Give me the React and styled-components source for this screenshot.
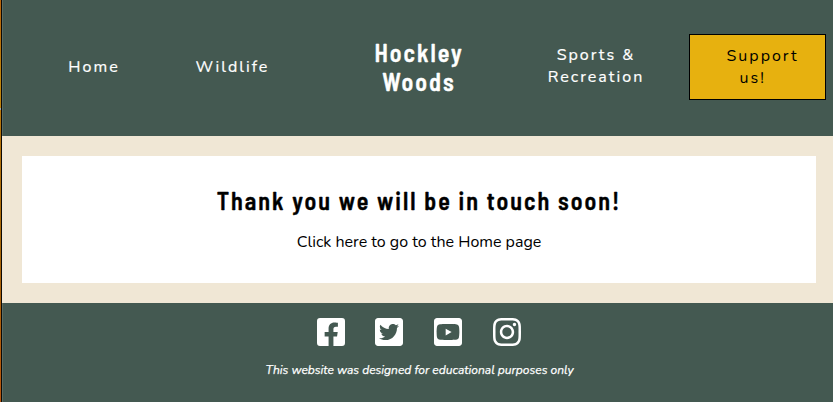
import React from "react";
import styled, { createGlobalStyle } from "styled-components";
import { FaFacebookSquare, FaTwitterSquare, FaYoutubeSquare, FaInstagram } from "react-icons/fa";

const GlobalStyle = createGlobalStyle`
  * { box-sizing: border-box; }
  body { margin: 0; font-family: Nunito, Lato, sans-serif; font-size: 16px; line-height: 22px; overflow: hidden; }
  h1, h2, p { margin: 0; }
`;

const Window = styled.div`
  display: grid;
  grid-template-columns: 1px 1px 1fr;
  height: 402px;
`;

const Backdrop = styled.div`
  background: linear-gradient(#b9650c 0, #b9700c 35px, #c0860c 80px, #c0820c 108px, #9aa6ad 108px, #9aa6ad 110px, #b9780c 110px, #a96808 250px, #b8560f 402px);
`;

const WindowEdge = styled.div`
  background: #0b0905;
`;

const Page = styled.div`
  display: flex;
  flex-direction: column;
  background: #f0e7d5;
`;

const Header = styled.header`
  display: grid;
  grid-template-columns: 182px 95px 279px 74px 56px 137px;
  height: 136px;
  padding-bottom: 2px;
  align-items: center;
  color: #fff;
  background: #445951;
  border-left: 1px solid #5b6e67;
`;

const NavLink = styled.a`
  display: flex;
  flex-direction: column;
  align-items: center;
  grid-column: ${(p) => p.$column};
  color: inherit;
  white-space: nowrap;
`;

const Line = styled.span`
  display: block;
  letter-spacing: 2px;
  -webkit-text-stroke: ${(p) => (p.$dark ? 0 : 0.2)}px currentColor;
`;

const SportsLink = styled(NavLink)`
  margin-bottom: 2px;
`;

const Condensed = styled.span`
  display: block;
  font-family: "Barlow Semi Condensed", "Roboto Condensed", sans-serif;
  font-weight: 600;
  font-size: 24px;
  line-height: 29px;
  letter-spacing: 2px;
  -webkit-text-stroke: 0.4px currentColor;
  white-space: nowrap;
`;

const Brand = styled.h1`
  grid-column: 3;
  display: flex;
  flex-direction: column;
  align-items: center;
  padding-right: 1px;
`;

const SupportButton = styled.a`
  grid-column: 6;
  display: flex;
  flex-direction: column;
  height: 66px;
  padding: 10px 0 10px 36.5px;
  color: #000;
  background: #e7b10f;
  border: 1px solid #000;
`;

const SecondLine = styled(Line)`
  padding-left: 13px;
`;

const Main = styled.main`
  height: 167px;
  padding: 20px 17px 20px 20px;
`;

const Card = styled.section`
  display: flex;
  flex-direction: column;
  align-items: center;
  height: 127px;
  padding-top: 30px;
  color: #000;
  background: #fff;
`;

const HomeLink = styled.a`
  margin-top: 16px;
`;

const Footer = styled.footer`
  flex: 1;
  display: flex;
  flex-direction: column;
  align-items: center;
  padding: 13px 0 0 2px;
  color: #fff;
  background: #445951;
  border-left: 1px solid #5b6e67;
`;

const Socials = styled.nav`
  display: flex;
  gap: 26.7px;
  padding-right: 0.5px;
  svg { display: block; width: 32px; height: 32px; }
`;

const Disclaimer = styled.p`
  margin-top: 11px;
  padding-left: 1px;
  font-size: 12px;
  line-height: 22px;
  font-style: italic;
  -webkit-text-stroke: 0.25px currentColor;
`;

export default function App() {
  return (
    <>
      <GlobalStyle />
      <Window>
        <Backdrop />
        <WindowEdge />
        <Page>
          <Header>
            <NavLink $column={1}><Line>Home</Line></NavLink>
            <NavLink $column={2}><Line>Wildlife</Line></NavLink>
            <Brand>
              <Condensed>Hockley</Condensed>
              <Condensed>Woods</Condensed>
            </Brand>
            <SportsLink $column={4}>
              <Line>Sports &amp;</Line>
              <Line>Recreation</Line>
            </SportsLink>
            <SupportButton>
              <Line $dark>Support</Line>
              <SecondLine $dark>us!</SecondLine>
            </SupportButton>
          </Header>
          <Main>
            <Card>
              <h2><Condensed>Thank you we will be in touch soon!</Condensed></h2>
              <HomeLink>Click here to go to the Home page</HomeLink>
            </Card>
          </Main>
          <Footer>
            <Socials>
              <FaFacebookSquare />
              <FaTwitterSquare />
              <FaYoutubeSquare />
              <FaInstagram />
            </Socials>
            <Disclaimer>This website was designed for educational purposes only</Disclaimer>
          </Footer>
        </Page>
      </Window>
    </>
  );
}
